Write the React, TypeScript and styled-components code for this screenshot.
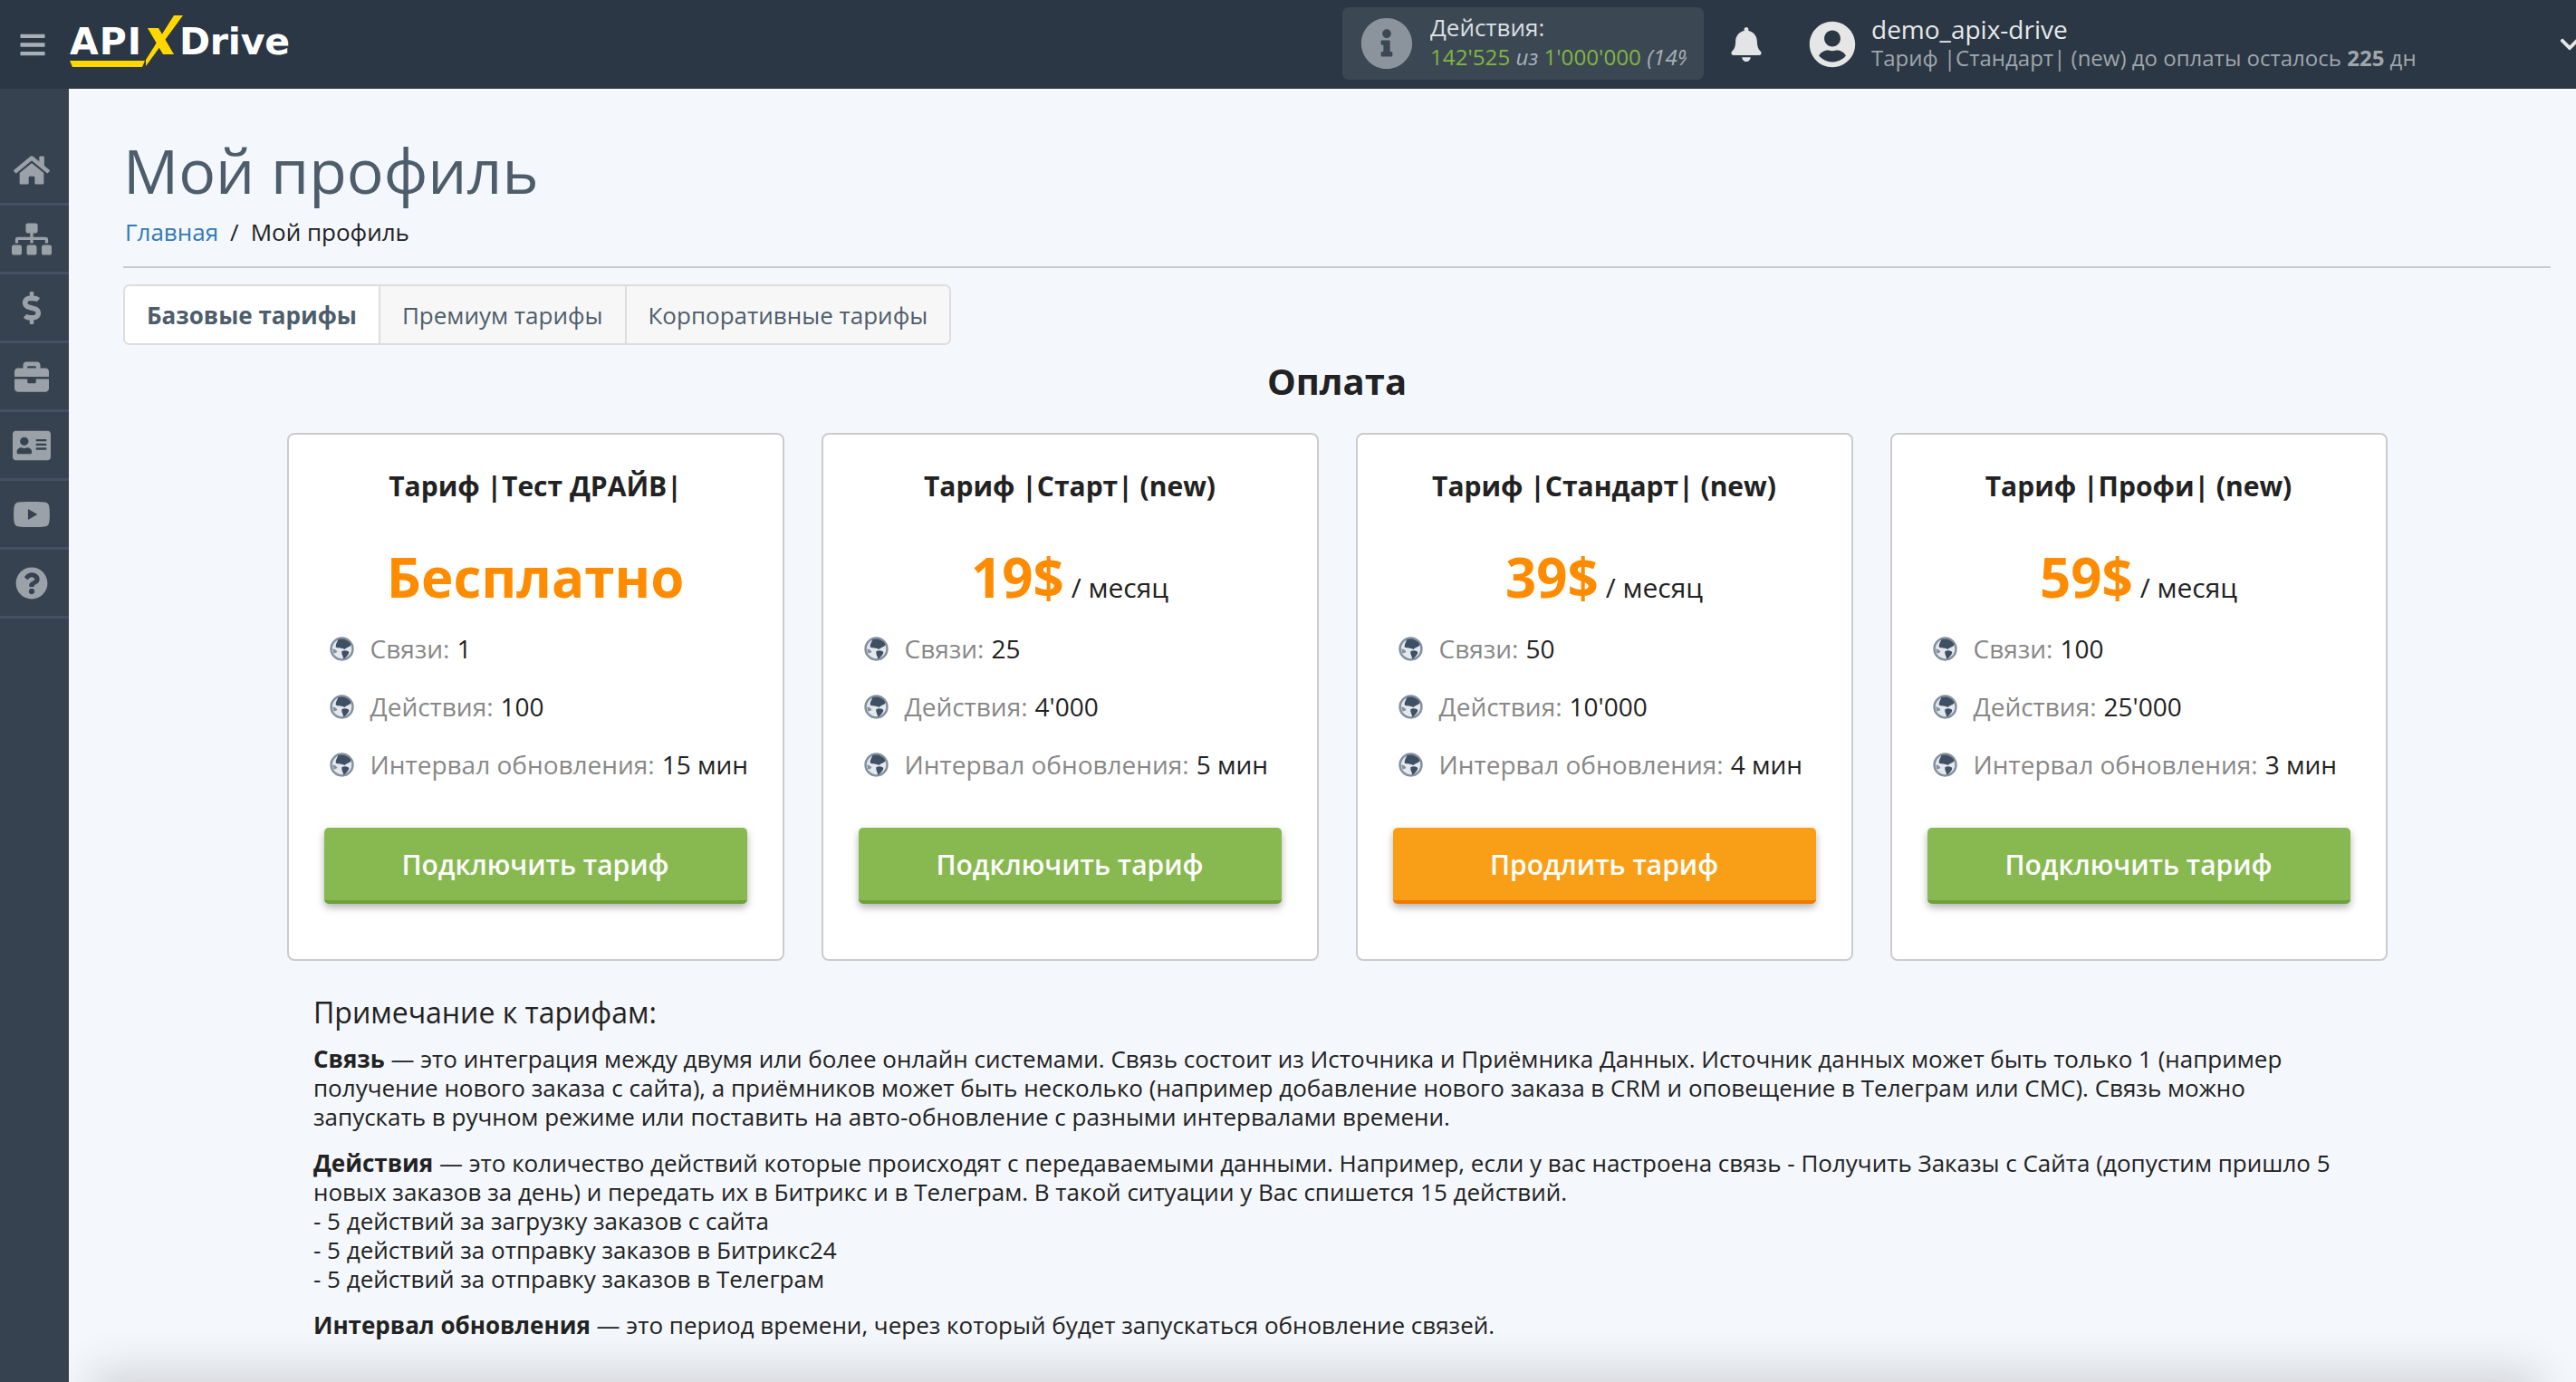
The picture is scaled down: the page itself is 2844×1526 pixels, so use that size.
import React from "react";
import styled, { createGlobalStyle } from "styled-components";
import {
  FaBars,
  FaHome,
  FaSitemap,
  FaDollarSign,
  FaBriefcase,
  FaAddressCard,
  FaYoutube,
  FaQuestionCircle,
  FaInfoCircle,
  FaBell,
  FaUserCircle,
  FaChevronDown,
} from "react-icons/fa";

const Global = createGlobalStyle`
  html, body { margin: 0; padding: 0; height: 100%; overflow: hidden; background: #f4f7fc; }
  * { box-sizing: border-box; }
  body { font-family: "Open Sans", "Liberation Sans", sans-serif; }
`;

const Page = styled.div`
  position: relative;
  width: 2844px;
  height: 1526px;
  overflow: hidden;
  display: flex;
  flex-direction: column;
`;

const TopBar = styled.header`
  height: 98px;
  flex: none;
  background: #2b3744;
  display: flex;
  align-items: center;
  color: #e6e6e6;
`;

const Burger = styled.div`
  width: 30px;
  margin-left: 21px;
  display: flex;
  color: #a9afb6;
  font-size: 31px;
`;

const Logo = styled.div`
  position: relative;
  margin-left: 26px;
  width: 243px;
  height: 64px;
  flex: none;
  color: #fff;
  font-family: "DejaVu Sans", "Open Sans", sans-serif;
  font-weight: 700;
  font-size: 41px;
  line-height: 54px;
`;

const LogoApi = styled.span`
  position: absolute;
  left: 0;
  top: 2px;
  letter-spacing: 1px;
`;

const LogoDrive = styled.span`
  position: absolute;
  left: 121px;
  top: 2px;
  letter-spacing: -0.2px;
`;

const LogoMark = styled.svg`
  position: absolute;
  left: 0;
  top: 0;
`;

const ActionsBox = styled.div`
  margin-left: 1162px;
  margin-bottom: 2px;
  width: 399px;
  height: 80px;
  border-radius: 7px;
  background: #3b4853;
  display: flex;
  align-items: center;
  padding-left: 20px;
  flex: none;
`;

const InfoIcon = styled.div`
  display: flex;
  font-size: 58px;
  color: #8b949c;
  flex: none;
`;

const ActionsText = styled.div`
  margin-left: 19px;
  margin-top: -4px;
  width: 283px;
  overflow: hidden;
  white-space: nowrap;
`;

const ActionsTitle = styled.div`
  font-size: 26px;
  line-height: 33px;
  color: #dcdfe2;
`;

const ActionsValue = styled.div`
  font-size: 24.2px;
  line-height: 31px;
  color: #83b443;
`;

const Muted = styled.i`
  color: #a9afb6;
`;

const BellIcon = styled.div`
  margin-left: 28px;
  display: flex;
  font-size: 38px;
  color: #e2e4e6;
  flex: none;
`;

const Avatar = styled.div`
  margin-left: 50px;
  display: flex;
  font-size: 52px;
  color: #e6e6e6;
  flex: none;
`;

const UserBlock = styled.div`
  margin-left: 17px;
  margin-top: -3px;
  flex: none;
  width: 759px;
  white-space: nowrap;
`;

const UserName = styled.div`
  font-size: 28px;
  line-height: 33px;
  color: #e6e8ea;
`;

const UserPlan = styled.div`
  font-size: 24px;
  line-height: 30px;
  color: #a0a6ac;
  b { font-weight: 700; }
`;

const Chevron = styled.div`
  display: flex;
  font-size: 24px;
  color: #e6e6e6;
  flex: none;
`;

const Body = styled.div`
  flex: 1;
  display: flex;
  min-height: 0;
`;

const Sidebar = styled.nav`
  position: relative;
  z-index: 1;
  width: 76px;
  flex: none;
  background: #36424f;
  padding-top: 53px;
`;

const SideItem = styled.div<{ $size: number }>`
  height: 76px;
  border-bottom: 3px solid #455160;
  display: flex;
  align-items: center;
  justify-content: center;
  padding-right: 6px;
  color: #9aa1a8;
  font-size: ${(p) => p.$size}px;
`;

const Main = styled.main`
  flex: 1;
  min-width: 0;
  padding: 0 28px 0 60px;
`;

const Title = styled.h1`
  margin: 49px 0 0;
  font-size: 68px;
  line-height: 82px;
  font-weight: 400;
  color: #4e5d6b;
`;

const Crumbs = styled.div`
  margin-top: 9px;
  font-size: 26px;
  line-height: 36px;
  color: #222;
  display: flex;
  gap: 13px;
  padding: 0 0 20px 2px;
  border-bottom: 2px solid #ccc;
`;

const CrumbLink = styled.a`
  color: #337ab7;
`;

const Tabs = styled.div`
  margin-top: 18px;
  display: inline-flex;
  height: 67px;
  border: 2px solid #ddd;
  border-radius: 7px;
  overflow: hidden;
  vertical-align: top;
`;

const Tab = styled.div<{ $active?: boolean }>`
  padding: 0 24px;
  display: flex;
  align-items: center;
  font-size: 26px;
  color: #4e5d6b;
  background: ${(p) => (p.$active ? "#fff" : "#f7f7f7")};
  font-weight: ${(p) => (p.$active ? 700 : 400)};
  & + & { border-left: 2px solid #ddd; }
`;

const Heading = styled.h2`
  margin: 14px 0 0;
  text-align: center;
  font-size: 40px;
  line-height: 52px;
  font-weight: 700;
  color: #222;
`;

const Cards = styled.div`
  margin: 31px auto 0;
  display: grid;
  grid-template-columns: repeat(4, 549px);
  gap: 41px;
  justify-content: center;
`;

const Card = styled.div`
  height: 583px;
  background: #fff;
  border: 2px solid #ccc;
  border-radius: 8px;
  padding: 0 39px;
  display: flex;
  flex-direction: column;
`;

const CardTitle = styled.div`
  margin-top: 37px;
  text-align: center;
  font-size: 30px;
  line-height: 40px;
  font-weight: 700;
  color: #222;
  white-space: nowrap;
`;

const PriceLine = styled.div`
  margin-top: 43px;
  height: 74px;
  text-align: center;
  font-size: 30px;
  line-height: 74px;
  color: #222;
  white-space: nowrap;
`;

const Price = styled.span`
  font-size: 60px;
  font-weight: 700;
  color: #ff8c00;
`;

const Features = styled.div`
  margin-top: 22px;
  display: flex;
  flex-direction: column;
  gap: 24px;
`;

const Feature = styled.div`
  display: flex;
  align-items: center;
  height: 40px;
  font-size: 28px;
  color: #222;
  white-space: nowrap;
  padding-left: 6px;
`;

const Globe = styled.svg`
  flex: none;
  width: 27px;
  height: 27px;
  margin-right: 18px;
  filter: blur(0.5px);
`;

const Label = styled.span`
  color: #888;
  margin-right: 8px;
`;

const Btn = styled.div<{ $orange?: boolean }>`
  margin-top: 50px;
  height: 84px;
  border-radius: 5px;
  display: flex;
  align-items: center;
  justify-content: center;
  font-size: 30px;
  font-weight: 600;
  color: #fff;
  background: ${(p) => (p.$orange ? "#f99f17" : "#87b950")};
  border-bottom: 4px solid ${(p) => (p.$orange ? "#ee7a00" : "#6fa03a")};
  box-shadow: 0 4px 8px rgba(0, 0, 0, 0.3);
`;

const Notes = styled.section`
  margin: 35px 0 0 210px;
  color: #222;
`;

const NotesTitle = styled.div`
  font-size: 32px;
  line-height: 44px;
`;

const Para = styled.p`
  margin: 13px 0 0;
  font-size: 26px;
  line-height: 32px;
  white-space: nowrap;
  b { font-weight: 700; }
  & + & { margin-top: 19px; }
`;

const BottomShade = styled.div`
  position: absolute;
  left: 110px;
  right: 50px;
  bottom: -30px;
  height: 30px;
  box-shadow: 0 0 50px 10px rgba(0, 0, 0, 0.16);
  pointer-events: none;
`;

const plans = [
  { title: "Тариф |Тест ДРАЙВ|", price: "Бесплатно", unit: false, links: "1", actions: "100", interval: "15 мин", cta: "Подключить тариф", orange: false },
  { title: "Тариф |Старт| (new)", price: "19$", unit: true, links: "25", actions: "4'000", interval: "5 мин", cta: "Подключить тариф", orange: false },
  { title: "Тариф |Стандарт| (new)", price: "39$", unit: true, links: "50", actions: "10'000", interval: "4 мин", cta: "Продлить тариф", orange: true },
  { title: "Тариф |Профи| (new)", price: "59$", unit: true, links: "100", actions: "25'000", interval: "3 мин", cta: "Подключить тариф", orange: false },
];

const side: [React.ComponentType, number][] = [
  [FaHome, 40],
  [FaSitemap, 44],
  [FaDollarSign, 36],
  [FaBriefcase, 38],
  [FaAddressCard, 42],
  [FaYoutube, 42],
  [FaQuestionCircle, 36],
];

const GlobeIcon = () => (
  <Globe viewBox="0 0 26 26">
    <circle cx="13" cy="13" r="11.5" fill="#e4e8ed" stroke="#84919f" strokeWidth="2.4" />
    <path d="M9 3C13 1.5 20 3 22.5 8C23 11 18 11 16 13.5C13 11.5 9 12.5 6.5 11C6 8 8 6 9 3Z" fill="#3f5064" />
    <path d="M13 15.5C16 14 20.5 15 20.5 17C19.5 20 16.5 23 14.5 23.5C14.5 20.5 12 18.5 13 15.5Z" fill="#3f5064" />
    <path d="M3 13C5 13 7 14 8 16C7 18 5 18 4 17Z" fill="#84919f" />
  </Globe>
);

const Row = ({ label, value }: { label: string; value: string }) => (
  <Feature>
    <GlobeIcon />
    <Label>{label}</Label>
    {value}
  </Feature>
);

export default function App() {
  return (
    <Page>
      <Global />
      <TopBar>
        <Burger>
          <FaBars />
        </Burger>
        <Logo>
          <LogoApi>API</LogoApi>
          <LogoDrive>Drive</LogoDrive>
          <LogoMark width="243" height="64" viewBox="0 0 243 64">
            <polygon points="0,50 83,50 80,57 3,57" fill="#ffd800" />
            <polygon points="86,14 98,14 115,43 103,43" fill="#ffd800" />
            <polygon points="115,0 125,0 84,56 84,49" fill="#ffd800" />
          </LogoMark>
        </Logo>
        <ActionsBox>
          <InfoIcon>
            <FaInfoCircle />
          </InfoIcon>
          <ActionsText>
            <ActionsTitle>Действия:</ActionsTitle>
            <ActionsValue>
              142'525 <Muted>из</Muted> 1'000'000 <Muted>(14%)</Muted>
            </ActionsValue>
          </ActionsText>
        </ActionsBox>
        <BellIcon>
          <FaBell />
        </BellIcon>
        <Avatar>
          <FaUserCircle />
        </Avatar>
        <UserBlock>
          <UserName>demo_apix-drive</UserName>
          <UserPlan>
            Тариф |Стандарт| (new) до оплаты осталось <b>225</b> дн
          </UserPlan>
        </UserBlock>
        <Chevron>
          <FaChevronDown />
        </Chevron>
      </TopBar>
      <Body>
        <Sidebar>
          {side.map(([Icon, size], i) => (
            <SideItem key={i} $size={size}>
              <Icon />
            </SideItem>
          ))}
        </Sidebar>
        <Main>
          <Title>Мой профиль</Title>
          <Crumbs>
            <CrumbLink>Главная</CrumbLink>
            <span>/</span>
            <span>Мой профиль</span>
          </Crumbs>
          <Tabs>
            <Tab $active>Базовые тарифы</Tab>
            <Tab>Премиум тарифы</Tab>
            <Tab>Корпоративные тарифы</Tab>
          </Tabs>
          <Heading>Оплата</Heading>
          <Cards>
            {plans.map((p) => (
              <Card key={p.title}>
                <CardTitle>{p.title}</CardTitle>
                <PriceLine>
                  <Price>{p.price}</Price>
                  {p.unit ? " / месяц" : ""}
                </PriceLine>
                <Features>
                  <Row label="Связи:" value={p.links} />
                  <Row label="Действия:" value={p.actions} />
                  <Row label="Интервал обновления:" value={p.interval} />
                </Features>
                <Btn $orange={p.orange}>{p.cta}</Btn>
              </Card>
            ))}
          </Cards>
          <Notes>
            <NotesTitle>Примечание к тарифам:</NotesTitle>
            <Para>
              <b>Связь</b> — это интеграция между двумя или более онлайн системами. Связь состоит из Источника и Приёмника Данных. Источник данных может быть только 1 (например
              <br />
              получение нового заказа с сайта), а приёмников может быть несколько (например добавление нового заказа в CRM и оповещение в Телеграм или СМС). Связь можно
              <br />
              запускать в ручном режиме или поставить на авто-обновление с разными интервалами времени.
            </Para>
            <Para>
              <b>Действия</b> — это количество действий которые происходят с передаваемыми данными. Например, если у вас настроена связь - Получить Заказы с Сайта (допустим пришло 5
              <br />
              новых заказов за день) и передать их в Битрикс и в Телеграм. В такой ситуации у Вас спишется 15 действий.
              <br />
              - 5 действий за загрузку заказов с сайта
              <br />
              - 5 действий за отправку заказов в Битрикс24
              <br />
              - 5 действий за отправку заказов в Телеграм
            </Para>
            <Para>
              <b>Интервал обновления</b> — это период времени, через который будет запускаться обновление связей.
            </Para>
          </Notes>
        </Main>
      </Body>
      <BottomShade />
    </Page>
  );
}
